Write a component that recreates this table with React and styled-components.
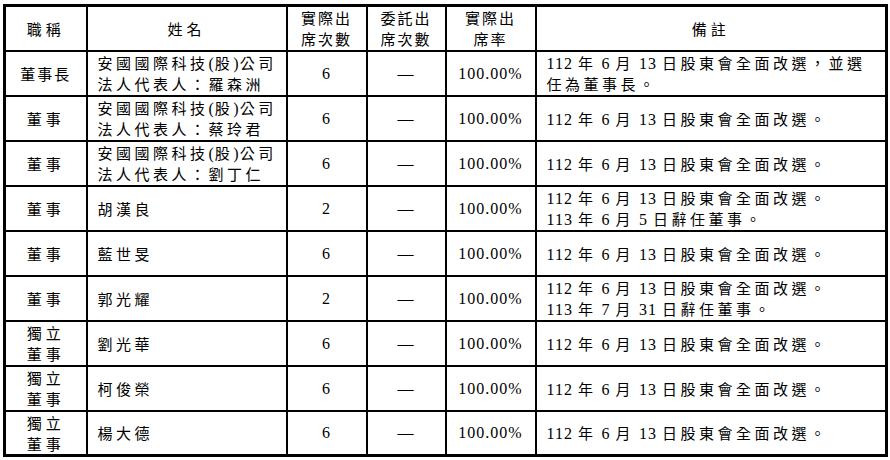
import React from "react";
import styled, { createGlobalStyle } from "styled-components";

const Global = createGlobalStyle`
  html, body { margin: 0; padding: 0; background: #fff; }
  body { font-family: "Liberation Serif", "Noto Sans CJK TC", serif; color: #000; }
`;

const Page = styled.div`
  padding: 4px 0 0 3px;
`;

const Table = styled.table`
  border-collapse: collapse;
  table-layout: fixed;
  width: 882px;
  border: 3px solid #000;
  font-size: 16px;
`;

const Row = styled.tr`
  height: 45px;
`;

const Cell = styled.td`
  border: 2px solid #000;
  padding: 0 ${(p) => (p.$left ? "10px" : "0")};
  text-align: ${(p) => (p.$left ? "left" : "center")};
  vertical-align: middle;
  line-height: 21px;
  height: 41px;
  white-space: nowrap;
  font-weight: normal;
  letter-spacing: 1px;
`;

const Head = styled(Cell).attrs({ as: "th" })``;

const Line = styled.div`
  display: block;
  height: 21px;
  line-height: 21px;
`;

const Han = styled.span`
  font-family: "Noto Sans CJK TC", sans-serif;
  font-size: 15px;
  line-height: 21px;
  letter-spacing: ${(p) => p.$sp ?? 3.5}px;
`;

const CJK = /([\u2E80-\u9FFF\uF900-\uFAFF\uFF00-\uFFEF\u3000-\u303F]+)/;

function Mixed({ text, sp }) {
  return text.split(CJK).map((part, i) =>
    i % 2 ? (
      <Han key={i} $sp={sp}>
        {part}
      </Han>
    ) : (
      <React.Fragment key={i}>{part}</React.Fragment>
    )
  );
}

function Lines({ lines, sp }) {
  return lines.map((l, i) => (
    <Line key={i}>
      <Mixed text={l} sp={sp} />
    </Line>
  ));
}

const colWidths = [82, 200, 80, 79, 90, 351];

const REMARK_A = "112 年 6 月 13 日股東會全面改選。";
const COMPANY = "安國國際科技(股)公司";

const rows = [
  { title: ["董事長"], tsp: 2, name: [COMPANY, "法人代表人：羅森洲"], n: "6", remark: ["112 年 6 月 13 日股東會全面改選，並選", "任為董事長。"] },
  { title: ["董事"], name: [COMPANY, "法人代表人：蔡玲君"], n: "6", remark: [REMARK_A] },
  { title: ["董事"], name: [COMPANY, "法人代表人：劉丁仁"], n: "6", remark: [REMARK_A] },
  { title: ["董事"], name: ["胡漢良"], n: "2", remark: [REMARK_A, "113 年 6 月 5 日辭任董事。"] },
  { title: ["董事"], name: ["藍世旻"], n: "6", remark: [REMARK_A] },
  { title: ["董事"], name: ["郭光耀"], n: "2", remark: [REMARK_A, "113 年 7 月 31 日辭任董事。"] },
  { title: ["獨立", "董事"], name: ["劉光華"], n: "6", remark: [REMARK_A] },
  { title: ["獨立", "董事"], name: ["柯俊榮"], n: "6", remark: [REMARK_A] },
  { title: ["獨立", "董事"], name: ["楊大德"], n: "6", remark: [REMARK_A] },
];

export default function App() {
  return (
    <Page>
      <Global />
      <Table>
        <colgroup>
          {colWidths.map((w, i) => (
            <col key={i} style={{ width: w }} />
          ))}
        </colgroup>
        <thead>
          <Row>
            <Head><Lines lines={["職稱"]} sp={4} /></Head>
            <Head><Lines lines={["姓名"]} sp={4} /></Head>
            <Head><Lines lines={["實際出", "席次數"]} sp={2} /></Head>
            <Head><Lines lines={["委託出", "席次數"]} sp={2} /></Head>
            <Head><Lines lines={["實際出", "席率"]} sp={2} /></Head>
            <Head><Lines lines={["備註"]} sp={4} /></Head>
          </Row>
        </thead>
        <tbody>
          {rows.map((r, i) => (
            <Row key={i}>
              <Cell><Lines lines={r.title} sp={r.tsp ?? 4} /></Cell>
              <Cell $left><Lines lines={r.name} /></Cell>
              <Cell>{r.n}</Cell>
              <Cell>—</Cell>
              <Cell>100.00%</Cell>
              <Cell $left><Lines lines={r.remark} /></Cell>
            </Row>
          ))}
        </tbody>
      </Table>
    </Page>
  );
}
